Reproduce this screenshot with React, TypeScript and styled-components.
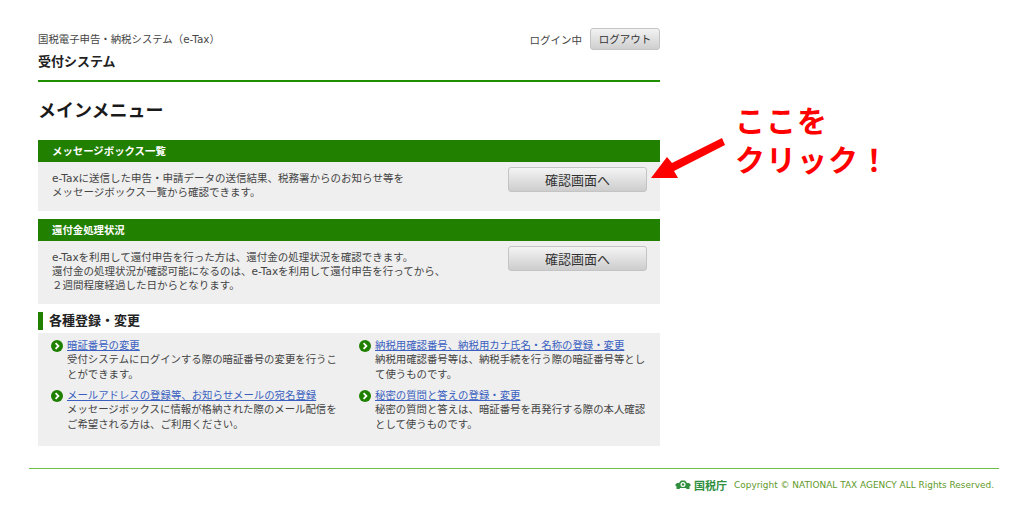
import React from 'react'
import styled, { createGlobalStyle } from 'styled-components'

const GlobalStyle = createGlobalStyle`
	html, body {
		margin: 0;
		padding: 0;
		background: #fff;
	}
	body {
		font-family: "DejaVu Sans", "Noto Sans CJK JP", sans-serif;
		font-size: 10.5px;
		color: #333;
	}
`

const links = [
	{
		title: '暗証番号の変更',
		lines: ['受付システムにログインする際の暗証番号の変更を行うこ', 'とができます。'],
	},
	{
		title: '納税用確認番号、納税用カナ氏名・名称の登録・変更',
		lines: ['納税用確認番号等は、納税手続を行う際の暗証番号等とし', 'て使うものです。'],
	},
	{
		title: 'メールアドレスの登録等、お知らせメールの宛名登録',
		lines: ['メッセージボックスに情報が格納された際のメール配信を', 'ご希望される方は、ご利用ください。'],
	},
	{
		title: '秘密の質問と答えの登録・変更',
		lines: ['秘密の質問と答えは、暗証番号を再発行する際の本人確認', 'として使うものです。'],
	},
]

function App() {
	return (
		<>
			<GlobalStyle />
			<Page>
				<Content>
					<Header>
						<HeaderLeft>
							<SystemName>国税電子申告・納税システム（e-Tax）</SystemName>
							<SubName>受付システム</SubName>
						</HeaderLeft>
						<Login>
							<span>ログイン中</span>
							<LogoutButton>ログアウト</LogoutButton>
						</Login>
					</Header>
					<Title>メインメニュー</Title>

					<SectionBar>メッセージボックス一覧</SectionBar>
					<SectionBody>
						<BodyText>
							e-Taxに送信した申告・申請データの送信結果、税務署からのお知らせ等を
							<br />
							メッセージボックス一覧から確認できます。
						</BodyText>
						<ConfirmButton>確認画面へ</ConfirmButton>
					</SectionBody>

					<SectionBar>還付金処理状況</SectionBar>
					<SectionBody $tall>
						<BodyText>
							e-Taxを利用して還付申告を行った方は、還付金の処理状況を確認できます。
							<br />
							還付金の処理状況が確認可能になるのは、e-Taxを利用して還付申告を行ってから、
							<br />
							２週間程度経過した日からとなります。
						</BodyText>
						<ConfirmButton>確認画面へ</ConfirmButton>
					</SectionBody>

					<SubHeading>各種登録・変更</SubHeading>
					<LinkPanel>
						{links.map((item) => (
							<LinkItem key={item.title}>
								<Bullet viewBox="0 0 12 12">
									<circle cx="6" cy="6" r="6" fill="#1f8000" />
									<path d="M4.6 3.2 7.4 6 4.6 8.8" fill="none" stroke="#fff" strokeWidth="1.8" />
								</Bullet>
								<div>
									<LinkTitle href="#">{item.title}</LinkTitle>
									<LinkText>
										{item.lines[0]}
										<br />
										{item.lines[1]}
									</LinkText>
								</div>
							</LinkItem>
						))}
					</LinkPanel>
				</Content>
				<Footer>
					<AgencyMark viewBox="0 0 16 9">
						<path d="M0 5 2 3 4 3 6 .5h4L12 3h2L16 5 14.500 6.500V9h-3L11 8H5L4.500 9h-3V6.500z" fill="#2f8f3f" />
						<circle cx="8" cy="4.500" r="2.500" fill="#fff" />
						<circle cx="8" cy="4.500" r="1.200" fill="#2f8f3f" />
					</AgencyMark>
					<AgencyName>国税庁</AgencyName>
					<Copyright>Copyright © NATIONAL TAX AGENCY ALL Rights Reserved.</Copyright>
				</Footer>

				<Callout>
					ここを
					<br />
					クリック！
				</Callout>
				<Arrow viewBox="0 0 80 50">
					<path d="M1 42 17 21 22 27 72 2 75 9 24 35 28 42Z" fill="#ff0000" />
				</Arrow>
			</Page>
		</>
	)
}

const Page = styled.div`
	position: relative;
	width: 1009px;
	height: 510px;
	padding: 28px 10px 0 29px;
	box-sizing: border-box;
	overflow: hidden;
`

const Content = styled.div`
	width: 622px;
	margin-left: 9px;
`

const Header = styled.div`
	display: flex;
	justify-content: space-between;
	align-items: flex-start;
	height: 52px;
	border-bottom: 2px solid #1f8f00;
`

const HeaderLeft = styled.div`
	display: flex;
	flex-direction: column;
	padding-top: 3px;
	gap: 6px;
`

const SystemName = styled.div`
	font-size: 10.4px;
	line-height: 16px;
	color: #444;
`

const SubName = styled.div`
	font-size: 13px;
	line-height: 18px;
	font-weight: bold;
	color: #222;
`

const Login = styled.div`
	display: flex;
	align-items: center;
	gap: 8px;
	font-size: 10.5px;
	color: #444;
`

const LogoutButton = styled.button`
	width: 70px;
	height: 22px;
	padding: 0 0 2px;
	font-family: inherit;
	font-size: 10.5px;
	color: #333;
	border: 1px solid #c4c4c4;
	border-radius: 3px;
	background: linear-gradient(#f2f2f2, #cfcfcf);
`

const Title = styled.h1`
	margin: 15px 0 16px;
	font-size: 18px;
	line-height: 27px;
	font-weight: bold;
	color: #1a1a1a;
`

const SectionBar = styled.div`
	height: 22px;
	padding-left: 14px;
	font-size: 10.4px;
	line-height: 22px;
	font-weight: bold;
	color: #fff;
	background: #228000;
`

const SectionBody = styled.div<{ $tall?: boolean }>`
	display: flex;
	justify-content: space-between;
	align-items: flex-start;
	height: ${(p) => (p.$tall ? 63 : 49)}px;
	margin-bottom: 8px;
	padding: 5px 13px 0 14px;
	box-sizing: border-box;
	background: #efefef;
`

const BodyText = styled.p`
	margin: 4px 0 0;
	font-size: 10.5px;
	line-height: 14px;
	color: #444;
`

const ConfirmButton = styled.button`
	flex: none;
	width: 139px;
	height: 25px;
	padding: 0;
	font-family: inherit;
	font-size: 13px;
	color: #333;
	border: 1px solid #c4c4c4;
	border-radius: 3px;
	background: linear-gradient(#f4f4f4, #cdcdcd);
`

const SubHeading = styled.h2`
	margin: 0 0 3px;
	height: 18px;
	padding-left: 6px;
	border-left: 5px solid #228000;
	font-size: 13px;
	line-height: 18px;
	font-weight: bold;
	color: #222;
`

const LinkPanel = styled.div`
	display: grid;
	grid-template-columns: 308px 1fr;
	row-gap: 7px;
	height: 113px;
	padding: 5px 13px 0;
	box-sizing: border-box;
	align-content: start;
	background: #efefef;
`

const LinkItem = styled.div`
	display: flex;
	gap: 4px;
`

const Bullet = styled.svg`
	flex: none;
	width: 12px;
	height: 12px;
	margin-top: 2px;
`

const LinkTitle = styled.a`
	display: block;
	font-size: 10.4px;
	line-height: 14px;
	color: #3a5fc0;
	text-decoration: underline;
`

const LinkText = styled.p`
	margin: 0;
	font-size: 10.4px;
	line-height: 14.7px;
	color: #444;
`

const Footer = styled.div`
	display: flex;
	justify-content: flex-end;
	align-items: center;
	height: 32px;
	margin-top: 22px;
	padding-right: 5px;
	border-top: 1px solid #6cc04a;
`

const AgencyMark = styled.svg`
	width: 16px;
	height: 9px;
	margin: 0 3px 2px 0;
`

const AgencyName = styled.span`
	margin-right: 7px;
	font-size: 11px;
	font-weight: bold;
	color: #2f8f3f;
`

const Copyright = styled.span`
	font-size: 8.95px;
	color: #5f9a2a;
`

const Callout = styled.div`
	position: absolute;
	left: 735px;
	top: 102px;
	font-size: 30px;
	line-height: 39px;
	font-weight: bold;
	letter-spacing: 1px;
	color: #ff0000;
`

const Arrow = styled.svg`
	position: absolute;
	left: 650px;
	top: 136px;
	width: 80px;
	height: 50px;
`

export default App
